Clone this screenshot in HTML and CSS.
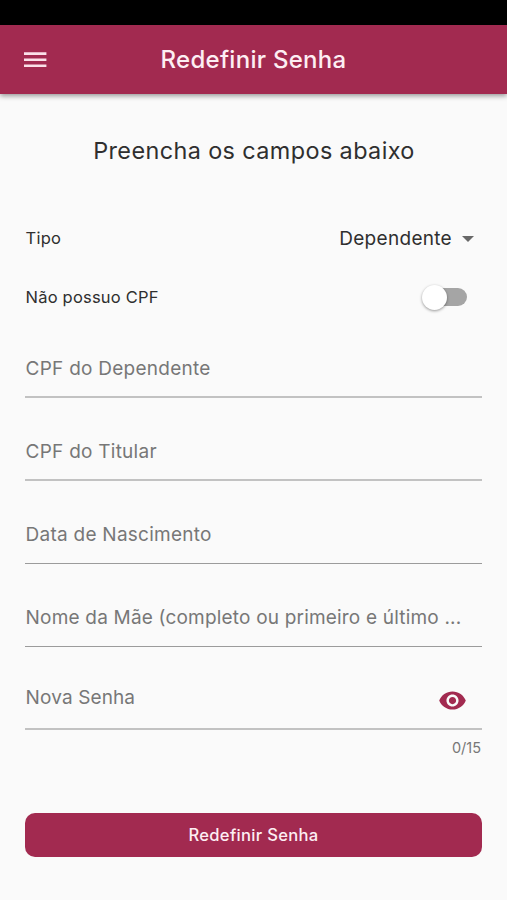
FILE: index.html
```html
<!DOCTYPE html>
<html lang="pt-BR">
<head>
<meta charset="utf-8">
<title>Redefinir Senha</title>
<link rel="stylesheet" href="styles.css">
</head>
<body>
<div class="status-bar"></div>
<header class="app-bar">
  <svg class="menu-icon" viewBox="0 0 30 30"><path d="M4 7.3h22.4v2.6H4zM4 13.4h22.4V16H4zM4 19.5h22.4v2.6H4z"/></svg>
  <h1 class="app-title">Redefinir Senha</h1>
</header>
<main class="content">
  <h2 class="heading">Preencha os campos abaixo</h2>
  <div class="row type-row">
    <span class="label">Tipo</span>
    <div class="select"><span>Dependente</span><svg class="caret" viewBox="0 0 12 6"><path d="M0 0h12L6 6z"/></svg></div>
  </div>
  <div class="row switch-row">
    <span class="label">Não possuo CPF</span>
    <div class="switch"><div class="thumb"></div></div>
  </div>
  <div class="field soft first"><span>CPF do Dependente</span></div>
  <div class="field soft"><span>CPF do Titular</span></div>
  <div class="field"><span>Data de Nascimento</span></div>
  <div class="field mother"><span>Nome da Mãe (completo ou primeiro e último ...</span></div>
  <div class="field password"><span>Nova Senha</span>
    <svg class="eye" viewBox="0 0 24 24"><path d="M12 4.5C7 4.5 2.73 7.61 1 12c1.73 4.39 6 7.5 11 7.5s9.27-3.11 11-7.5c-1.73-4.39-6-7.5-11-7.5zM12 17c-2.76 0-5-2.24-5-5s2.24-5 5-5 5 2.24 5 5-2.24 5-5 5zm0-8c-1.66 0-3 1.34-3 3s1.34 3 3 3 3-1.34 3-3-1.34-3-3-3z"/></svg>
  </div>
  <div class="counter">0/15</div>
  <button class="submit">Redefinir Senha</button>
</main>
</body>
</html>
```
FILE: styles.css
```css
* { box-sizing: border-box; }
body {
  margin: 0;
  height: 900px;
  background: #fafafa;
  color: #2f2f2f;
  font-family: Inter, "Liberation Sans", sans-serif;
  overflow: hidden;
}
.status-bar { height: 25px; background: #000; }
.app-bar {
  height: 69px;
  display: grid;
  grid-template-columns: 70px 1fr 70px;
  align-items: center;
  background: #a22a50;
  box-shadow: 0 2px 5px rgba(0, 0, 0, .4);
}
.menu-icon { width: 30px; height: 30px; margin-left: 20px; fill: #fbe0e9; }
.app-title {
  margin: 0;
  text-align: center;
  font-size: 24px;
  line-height: 30px;
  font-weight: 500;
  letter-spacing: .28px;
  color: #fdeef3;
}
.content { padding: 0 25px; }
.heading {
  margin: 42px 0 0;
  padding-left: 1px;
  text-align: center;
  font-size: 23.4px;
  line-height: 30px;
  font-weight: 400;
  letter-spacing: .4px;
}
.row { display: flex; align-items: center; justify-content: space-between; }
.type-row { height: 58px; margin-top: 43px; }
.switch-row { height: 60px; }
.label { padding-left: .6px; font-size: 16.5px; letter-spacing: .2px; }
.select { display: flex; align-items: center; gap: 10px; margin-right: 8px; font-size: 19px; letter-spacing: .3px; }
.caret { width: 12px; height: 6px; margin-top: 1px; fill: #686868; }
.switch {
  display: flex;
  align-items: center;
  width: 42px;
  height: 18px;
  margin-right: 15px;
  border-radius: 9px;
  background: #a5a5a5;
}
.thumb {
  flex: none;
  width: 25px;
  height: 25px;
  margin-left: -3px;
  border-radius: 50%;
  background: #fff;
  box-shadow: 0 1px 3px rgba(0, 0, 0, .4);
}
.field {
  height: 83px;
  padding: 41px 0 0 .6px;
  border-bottom: 1px solid #9b9b9b;
  color: #777;
  font-size: 19px;
  line-height: 26px;
  letter-spacing: .25px;
  white-space: nowrap;
}
.field.soft { border-bottom: 2px solid #c2c2c2; }
.field.first { height: 71px; padding-top: 29px; }
.field.mother { letter-spacing: .19px; }
.field.password {
  display: flex;
  justify-content: space-between;
  padding-top: 38px;
  border-bottom: 2px solid #c2c2c2;
  letter-spacing: .12px;
}
.eye { width: 29px; height: 29px; margin: .5px 15px 0 0; fill: #a22a50; }
.counter { margin-top: 9px; padding-right: 1px; text-align: right; font-size: 14.5px; line-height: 18px; color: #777; }
.submit {
  display: block;
  width: 457px;
  height: 44px;
  margin-top: 56px;
  padding: 0;
  border: 0;
  border-radius: 10px;
  background: #a22a50;
  color: #fdeef3;
  font: 500 16.6px/20px Inter, "Liberation Sans", sans-serif;
  letter-spacing: .3px;
}
```
